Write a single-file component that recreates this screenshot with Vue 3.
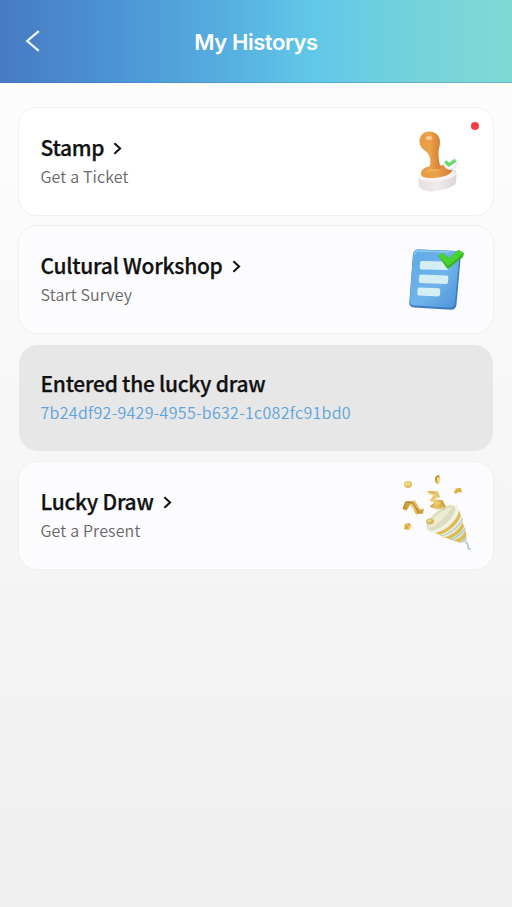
<script setup>
const cards = [
  { id: 'stamp', title: 'Stamp', sub: 'Get a Ticket', arrow: true, icon: 'stamp', dot: true },
  { id: 'workshop', title: 'Cultural Workshop', sub: 'Start Survey', arrow: true, icon: 'survey' },
  { id: 'entered', title: 'Entered the lucky draw', sub: '7b24df92-9429-4955-b632-1c082fc91bd0' },
  { id: 'draw', title: 'Lucky Draw', sub: 'Get a Present', arrow: true, icon: 'party' },
]
</script>

<template>
  <div class="page">
    <header class="header">
      <button class="back" aria-label="Back">
        <svg width="16" height="24" viewBox="0 0 16 24"><path d="M13.8 2.2 2.2 12l11.6 9.8" fill="none" stroke="#f4faff" stroke-width="2.2" /></svg>
      </button>
      <h1>My Historys</h1>
      <span></span>
    </header>
    <main class="list">
      <section v-for="card in cards" :key="card.id" class="card" :class="card.id">
        <div class="copy">
          <h2>
            <span class="title">{{ card.title }}</span>
            <svg v-if="card.arrow" class="chevron" width="9" height="13" viewBox="0 0 9 13"><path d="m1.4 1.2 5.7 5.3-5.7 5.3" fill="none" stroke="#111" stroke-width="2" /></svg>
          </h2>
          <p>{{ card.sub }}</p>
        </div>

        <svg v-if="card.icon === 'stamp'" class="art" width="100" height="100" viewBox="0 0 100 100">
          <defs>
            <linearGradient id="wood" x1="0" x2="1"><stop offset="0" stop-color="#e59a43" /><stop offset=".5" stop-color="#eca14a" /><stop offset="1" stop-color="#cf7c30" /></linearGradient>
            <linearGradient id="rubber" x1="0" x2="1"><stop offset="0" stop-color="#e5dfdf" /><stop offset=".5" stop-color="#f0ecec" /><stop offset="1" stop-color="#ddd5d6" /></linearGradient>
          </defs>
          <path d="M18.500 67c5-2 12-4 20-5l15-2c2 0 3 2 3 5l-.5 8c-2 4-13 7.500-23 8.500-8 0-13-2.500-14.300-6z" fill="url(#rubber)" />
          <ellipse cx="37.300" cy="66" rx="18.800" ry="5" fill="#f6f3f3" transform="rotate(-7 37.300 66)" />
          <path d="M21 63.500c0-4 4-6.500 10-7.500l14-1c6 0 8 2.500 7 6-2 4.500-12 7-21 7-7 0-10-1.500-10-4.500z" fill="url(#wood)" />
          <path d="M29.500 21.500c6 0 10.500 4.500 10.500 10.500 0 4-1.500 7-1.500 11 0 5 .5 10 2.500 15-3 2.500-9 2.500-12 0 2-5 2-9-.5-13.500-2-4-9-6-9-13 0-6 4-10 10-10z" fill="url(#wood)" />
          <ellipse cx="29" cy="28" rx="3.200" ry="2" fill="#ffe9c2" opacity=".6" />
          <path d="M24 62.500c2-2.300 5-3.500 8-3.800 3 .7 6 .5 9-.5-2 3-11 4.300-17 4.300z" fill="#f4b75f" opacity=".65" />
          <circle cx="50.500" cy="53" r="7" fill="#e5e8ed" />
          <circle cx="50" cy="51.800" r="6.600" fill="#fafcfd" />
          <path d="m45.200 51.500 3.700 3.500 6.600-4.800" fill="none" stroke="#69d86d" stroke-width="3.300" stroke-linejoin="round" />
        </svg>

        <svg v-if="card.icon === 'survey'" class="art" width="100" height="90" viewBox="0 0 100 90">
          <defs>
            <linearGradient id="paper" x1="0" y1="0" x2="1" y2="1"><stop offset="0" stop-color="#5faae6" /><stop offset=".55" stop-color="#70b4eb" /><stop offset="1" stop-color="#4b91d7" /></linearGradient>
          </defs>
          <path d="M23 14.500 60 16c3.500.2 5 2.500 4.700 6L60.500 69.500c-.4 3.500-2.500 5.500-6 5.300L18 72.500c-3.500-.2-5-2.300-4.700-5.500L17 20c.3-3.500 2.500-5.700 6-5.500z" fill="#3f7cc4" />
          <path d="M23 14.500 58.500 16c3.500.2 5 2.500 4.700 6L59 67.500c-.4 3.500-2.500 5.300-6 5.100l-34.500-2c-3.500-.2-5-2.100-4.700-5.300L17 20c.3-3.500 2.500-5.700 6-5.500z" fill="url(#paper)" />
          <path d="M18.500 20c.4-2.600 2-4 4.600-4l30 1" fill="none" stroke="#8dcbf5" stroke-width="1.300" />
          <g fill="#d4eef3">
            <path d="m26 26 25 .5q2 .2 1.800 2l-.4 4.500q-.2 2-2 2L25.500 34.500q-2-.1-1.800-2l.4-4.700q.2-2 1.900-1.800z" />
            <path d="m25 39.500 25.500 1q2 .1 1.900 2l-.4 4.500q-.2 2-2 2l-25.500-1q-2-.1-1.700-2l.4-4.500q.2-2 1.800-2z" />
            <path d="m23.500 52.500 19 .8q2 .1 1.800 2l-.3 4.200q-.2 2-2 2l-19-.9q-2-.1-1.800-2l.4-4.300q.2-2 1.900-1.800z" />
          </g>
          <path d="m42 20.500 5-2.500 5.500 5L62.500 15l5.500 3-1 4-14.500 11.500H51z" fill="#37b425" />
          <path d="m42 20.500 5-2.500 5.200 5.500L62.500 15l5.300 3L52 31z" fill="#48d330" />
        </svg>

        <svg v-if="card.icon === 'party'" class="art" width="110" height="115" viewBox="0 0 110 115">
          <defs>
            <linearGradient id="cone" x1="0" y1="0" x2="1" y2="1"><stop offset="0" stop-color="#f6f4d9" /><stop offset=".6" stop-color="#eeefdf" /><stop offset="1" stop-color="#c9d9ce" /></linearGradient>
            <linearGradient id="gold" x1="0" x2="1"><stop offset="0" stop-color="#b98522" /><stop offset=".5" stop-color="#ecc76a" /><stop offset="1" stop-color="#c3912e" /></linearGradient>
            <clipPath id="cone-shape"><path d="M36 71 67 45l4 12 2 3-.5 4 2.500 5 1 5 .5 9-7 .5-4-1.500-5-1-3.500-2-5-1-3-2.500z" /></clipPath>
          </defs>
          <path d="M36 71 67 45l4 12 2 3-.5 4 2.500 5 1 5 .5 9-7 .5-4-1.500-5-1-3.500-2-5-1-3-2.500z" fill="url(#cone)" />
          <g clip-path="url(#cone-shape)" fill="none">
            <g stroke="#ddb94e" stroke-width="3.200">
              <path d="M41 75.500c12 1 28-11 30-25" /><path d="M50 80c11 0 22-8 24.500-18" /><path d="M60 83.500c8 0 15-5 17-12" />
            </g>
            <g stroke="#a9c9bd" stroke-width="1.200">
              <path d="M44 78c12 0 27-10 29-21" /><path d="M53 82c9 0 20-7 23-15" /><path d="M64 85c6 0 11-4 14-9" />
            </g>
          </g>
          <ellipse cx="51.500" cy="59.300" rx="19" ry="9" transform="rotate(-40 51.500 59.300)" fill="#f5f5e8" />
          <ellipse cx="51.200" cy="59" rx="17.500" ry="7.500" transform="rotate(-40 51.200 59)" fill="#dcdcc0" />
          <path d="M38 69.500c1-9 16-21 25-21.500-5 5-13 18-25 21.500z" fill="#eeecd4" />
          <path d="m76 83 2 3 .3 3.500 2.300 1" fill="none" stroke="#a8bec4" stroke-width="1.400" />
          <path d="m36.500 32.500 11-.5 2.500 6-7 2.500 9.500.5 3.500 7-9 2.500-7.500-3 6-5-5-2 4-4.500z" fill="url(#gold)" />
          <path d="m38 33.500 9 4-6 4 9 3.500" fill="none" stroke="#efd277" stroke-width="1.500" />
          <path d="m12.500 50 2.500-7.500 10-1 4.500 8.500 3.500.5 1-2.500-1 6.500-7 1-5.500-10-4 6z" fill="url(#gold)" />
          <path d="m17 43 6 1 6 10" fill="none" stroke="#9e7425" stroke-width="1" />
          <ellipse cx="18" cy="25.500" rx="4" ry="3.400" fill="#e4bd60" /><ellipse cx="17.500" cy="24.700" rx="2.800" ry="2" fill="#f0d788" />
          <path d="M49 16c-4 0-5 4-3 8l3 1c-2-3-1-5 1-6z" fill="#ba942d" /><ellipse cx="48.500" cy="21" rx="1.700" ry="3" fill="#f2db8b" />
          <path d="m64 33.500 2-4 5-.5 1 4.500-4-.5-2 2z" fill="#d9ad40" />
          <path d="m15 65 4-1 2 2-2 5-5-1z" fill="#dda935" /><path d="m16 65 3 2-1 4" fill="none" stroke="#f0cc76" />
          <ellipse cx="40" cy="62.500" rx="4" ry="3" fill="#d1b75d" /><ellipse cx="39.300" cy="61.700" rx="2.400" ry="1.500" fill="#e6d488" />
          <path d="m52 47 2.500 4" stroke="#ddc888" stroke-width="2" />
        </svg>
        <i v-if="card.dot" class="dot"></i>
      </section>
    </main>
  </div>
</template>

<style>
body { margin: 0; }
</style>

<style scoped>
.page {
  min-height: 907px;
  background: linear-gradient(#fdfdfd 80px, #f8f8f8 360px, #f4f4f4 600px, #f0f0f0 850px);
  font-family: "Noto Sans CJK KR", "Noto Sans", sans-serif;
}
.header {
  box-sizing: border-box;
  height: 83px;
  display: grid;
  grid-template-columns: 56px 1fr 56px;
  align-items: center;
  border-bottom: 1px solid rgba(55, 115, 180, .35);
  background: linear-gradient(90deg, #477ac3 0%, #4c95d5 23%, #56addf 43%, #60c8e7 61%, #77d3d9 84%, #80d9d4 100%);
  background-clip: border-box;
}
.back { display: flex; padding: 0 0 0 25px; border: 0; background: none; }
h1 {
  margin: 1px 0 0;
  text-align: center;
  color: #fff;
  font: 600 22px/30px Inter, sans-serif;
  letter-spacing: -.45px;
}
.list { display: flex; flex-direction: column; gap: 9px; padding: 24px 18px; }
.card {
  position: relative;
  box-sizing: border-box;
  height: 109px;
  display: flex;
  justify-content: space-between;
  border: 1px solid #f0f0f1;
  border-width: 1.500px;
  border-radius: 19px;
  background: #fcfcfe;
  overflow: hidden;
}
.stamp { background: #fff; }
.entered { height: 106px; margin: 2px 1px 1px; border: 0; background: #e7e7e7; }
.copy { padding: 24px 0 0 21.500px; }
.entered .copy { padding-top: 23px; }
h2 { display: flex; align-items: center; gap: 9px; margin: 0; color: #111; font-size: 21px; font-weight: 500; line-height: 30px; letter-spacing: -.27px; white-space: nowrap; }
.title { -webkit-text-stroke: .25px #111; }
.chevron { margin-top: 2px; }
p { margin: 1px 0 0; color: #666; font-size: 16px; font-weight: 350; line-height: 26px; letter-spacing: .15px; white-space: nowrap; }
.entered p { color: #5ca2dc; letter-spacing: .31px; }
.art { flex: none; }
.stamp .art { margin: 2px -7px 0 0; }
.workshop .art { margin: 9px -3px 0 0; }
.draw .art { margin: -3px -7px 0 0; }
.dot { position: absolute; top: 14px; right: 14px; width: 8px; height: 8px; border-radius: 50%; background: #f43d42; }
</style>
